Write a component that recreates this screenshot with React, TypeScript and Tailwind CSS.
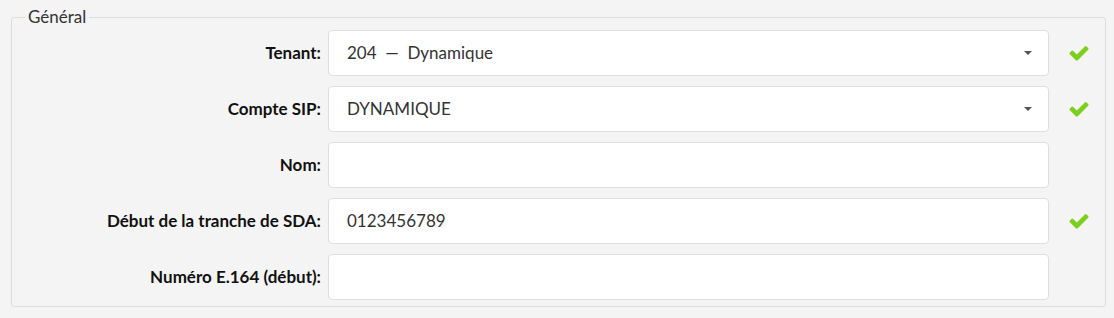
import * as React from "react";

type Row = {
  label: string;
  value?: string;
  select?: boolean;
  ok?: boolean;
};

const rows: Row[] = [
  { label: "Tenant:", value: "204  —  Dynamique", select: true, ok: true },
  { label: "Compte SIP:", value: "DYNAMIQUE", select: true, ok: true },
  { label: "Nom:" },
  { label: "Début de la tranche de SDA:", value: "0123456789", ok: true },
  { label: "Numéro E.164 (début):" },
];

function Check() {
  return (
    <svg viewBox="0 0 1792 1792" className="h-[22px] w-[22px] fill-[#7ccf1f]">
      <path d="M1671 566q0 40-28 68l-724 724-136 136q-28 28-68 28t-68-28l-136-136-362-362q-28-28-28-68t28-68l136-136q28-28 68-28t68 28l294 295 656-657q28-28 68-28t68 28l136 136q28 28 28 68z" />
    </svg>
  );
}

export default function App() {
  return (
    <main
      className="min-h-[318px] w-full bg-[#f4f4f4] pt-[7px] text-[#222]"
      style={{ fontFamily: "Lato, 'Open Sans', sans-serif" }}
    >
      <fieldset className="ml-[11px] mr-[8px] rounded-[3px] border border-[#dcdcdc] pb-[6px]">
        <legend className="ml-[13px] px-[3px] text-[17px] leading-[20px] text-[#333]">Général</legend>
        <div className="mt-[3px] flex flex-col gap-[10px]">
          {rows.map((r) => (
            <div key={r.label} className="flex items-center">
              <label className="w-[309px] text-right text-[17px] font-bold text-[#111]">{r.label}</label>
              <div className="ml-[7px] flex h-[46px] w-[721px] items-center justify-between rounded-[4px] border border-[#dedede] bg-white pl-[18px] pr-[16px] text-[17px] text-[#333]">
                <span className="whitespace-pre">{r.value ?? ""}</span>
                {r.select && (
                  <span className="h-0 w-0 border-x-[4px] border-t-[4px] border-x-transparent border-t-[#555]" />
                )}
              </div>
              <div className="ml-[19px] flex w-[22px] items-center">{r.ok && <Check />}</div>
            </div>
          ))}
        </div>
      </fieldset>
    </main>
  );
}
